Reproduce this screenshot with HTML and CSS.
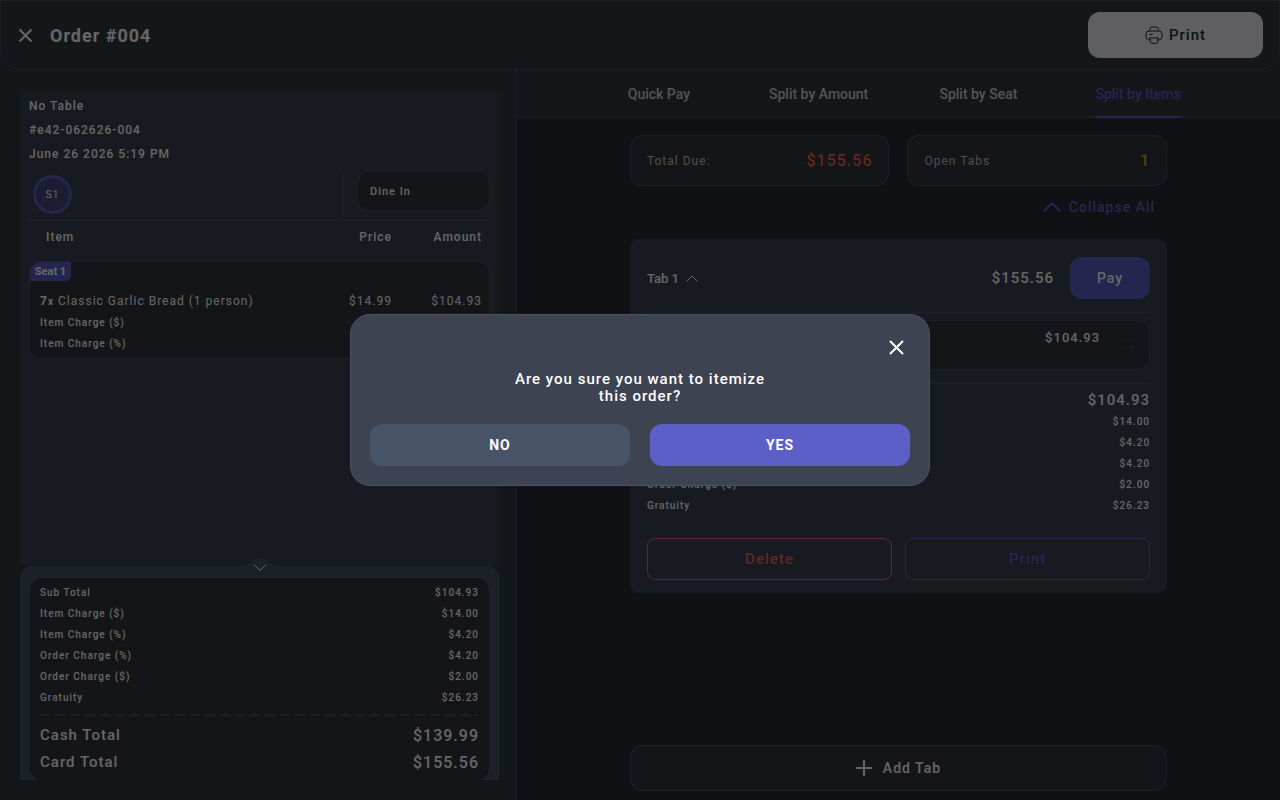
FILE: index.html
```html
<!DOCTYPE html>
<html lang="en">
<head>
	<meta charset="UTF-8">
	<meta name="viewport" content="width=device-width, initial-scale=1">
	<title>Order #004</title>
	<link rel="stylesheet" href="styles.css">
</head>
<body>
	<div class="page">
		<header class="header">
			<button class="icon-btn" type="button" aria-label="Close order">
				<svg width="15" height="15" viewBox="0 0 15 15"><path d="M1.5 1.5l12 12M13.5 1.5l-12 12"/></svg>
			</button>
			<h1>Order #004</h1>
			<button class="print-btn" type="button">
				<svg width="18" height="18" viewBox="0 0 18 18">
					<path d="M4.500 5V3.500Q4.500 1 7 1h4q2.500 0 2.500 2.500V5"/>
					<path d="M5 14H4q-3-.5-3-3V8q0-3 3-3h10q3 0 3 3v3q0 2.500-3 3h-1"/>
					<path d="M4 12h10M5 12v2.500Q5 17.500 8 17.500h2q3 0 3-3V12M4.500 8.500h3"/>
				</svg>
				Print
			</button>
		</header>

		<main class="main">
			<section class="left">
				<div class="order">
					<div class="info">
						<p>No Table</p>
						<p>#e42-062626-004</p>
						<p>June 26 2026 5:19 PM</p>
					</div>
					<div class="seats">
						<button class="seat" type="button">S1</button>
						<div class="order-type">
							<select aria-label="Order type">
								<option>Dine In</option>
							</select>
						</div>
					</div>
					<table class="items">
						<thead>
							<tr><th>Item</th><th>Price</th><th>Amount</th></tr>
						</thead>
						<tbody>
							<tr class="seat-row"><td><span class="badge">Seat 1</span></td></tr>
							<tr class="item-row"><td><b>7<small>x</small></b>Classic Garlic Bread (1 person)</td><td>$14.99</td><td>$104.93</td></tr>
							<tr class="charge"><td>Item Charge ($)</td><td></td><td>$14.00</td></tr>
							<tr class="charge"><td>Item Charge (%)</td><td></td><td>$4.20</td></tr>
						</tbody>
					</table>
				</div>
				<div class="totals">
					<button class="toggle" type="button" aria-label="Hide totals">
						<svg width="40" height="18" viewBox="0 0 40 18">
							<path class="bump" d="M0 9C9 9 10 1 20 1s11 8 20 8z"/>
							<path d="M14 7.500l6 6 6-6"/>
						</svg>
					</button>
					<div class="totals-box">
						<dl class="rows">
							<div><dt>Sub Total</dt><dd>$104.93</dd></div>
							<div><dt>Item Charge ($)</dt><dd>$14.00</dd></div>
							<div><dt>Item Charge (%)</dt><dd>$4.20</dd></div>
							<div><dt>Order Charge (%)</dt><dd>$4.20</dd></div>
							<div><dt>Order Charge ($)</dt><dd>$2.00</dd></div>
							<div><dt>Gratuity</dt><dd>$26.23</dd></div>
						</dl>
						<div class="dashes"></div>
						<dl class="rows big">
							<div><dt>Cash Total</dt><dd>$139.99</dd></div>
							<div><dt>Card Total</dt><dd>$155.56</dd></div>
						</dl>
					</div>
				</div>
			</section>

			<section class="right">
				<nav class="tabs">
					<a href="#quick">Quick Pay</a>
					<a href="#amount">Split by Amount</a>
					<a href="#seat">Split by Seat</a>
					<a class="active" href="#items">Split by Items</a>
				</nav>
				<div class="split">
					<div class="summary">
						<div class="box"><span>Total Due:</span><strong class="red">$155.56</strong></div>
						<div class="box"><span>Open Tabs</span><strong class="amber">1</strong></div>
					</div>
					<button class="collapse" type="button">
						<svg width="18" height="10" viewBox="0 0 18 10"><path d="M1 9l7-7q1-1 2 0l7 7"/></svg>
						Collapse All
					</button>
					<article class="tab-card">
						<div class="tab-head">
							<button class="tab-name" type="button">
								Tab 1
								<svg width="12" height="7" viewBox="0 0 12 7"><path d="M.5 6.500L6 1l5.500 5.500"/></svg>
							</button>
							<strong>$155.56</strong>
							<button class="pay" type="button">Pay</button>
						</div>
						<div class="tab-item">
							<div class="item-box">
								<strong>$104.93</strong>
								<svg width="20" height="18" viewBox="0 0 20 18"><path d="M5 1L0 6h20M0 12h20l-5 5"/></svg>
							</div>
						</div>
						<p class="sub">$104.93</p>
						<dl class="rows">
							<div><dt>Item Charge ($)</dt><dd>$14.00</dd></div>
							<div><dt>Item Charge (%)</dt><dd>$4.20</dd></div>
							<div><dt>Order Charge (%)</dt><dd>$4.20</dd></div>
							<div><dt>Order Charge ($)</dt><dd>$2.00</dd></div>
							<div><dt>Gratuity</dt><dd>$26.23</dd></div>
						</dl>
						<div class="tab-actions">
							<button class="delete" type="button">Delete</button>
							<button class="print" type="button">Print</button>
						</div>
					</article>
					<button class="add-tab" type="button">
						<svg width="16" height="16" viewBox="0 0 16 16"><path d="M8 0v16M0 8h16"/></svg>
						Add Tab
					</button>
				</div>
			</section>
		</main>
	</div>

	<div class="overlay">
		<div class="modal" role="dialog" aria-modal="true" aria-labelledby="question">
			<button class="icon-btn" type="button" aria-label="Close">
				<svg width="15" height="15" viewBox="0 0 15 15"><path d="M1 1l13 13M14 1L1 14"/></svg>
			</button>
			<p id="question">Are you sure you want to itemize this order?</p>
			<div class="modal-actions">
				<button class="no" type="button">NO</button>
				<button class="yes" type="button">YES</button>
			</div>
		</div>
	</div>
</body>
</html>
```

FILE: styles.css
```css
*{
	box-sizing: border-box;
}
:root{
	--side: #323a43;
	--dark: #282b32;
	--card: #32353d;
	--panel: #3b4252;
	--line: #475467;
	--purple: #5d5fc9;
}
body{
	margin: 0;
	background: var(--dark);
	color: #fff;
	font-family: Roboto, "Liberation Sans", sans-serif;
	font-size: 12px;
	letter-spacing: 1px;
}
h1, p, dl, dd{
	margin: 0;
}
button, select{
	font: inherit;
	color: inherit;
	letter-spacing: inherit;
	cursor: pointer;
}
button{
	padding: 0;
	border: 0;
	background: none;
}
svg{
	display: block;
	fill: none;
	stroke: currentColor;
}
.page{
	display: flex;
	flex-direction: column;
	height: 100vh;
	background: var(--side);
}

/* header */
.header{
	display: flex;
	align-items: center;
	height: 70px;
	padding: 0 16px;
	border: 1px solid var(--line);
	border-radius: 0 0 20px 20px;
}
.header h1{
	flex: 1;
	margin-left: 16px;
	font-size: 18px;
	font-weight: 700;
}
.icon-btn svg{
	stroke-width: 2;
}
.header .icon-btn{
	padding: 1px;
}
.print-btn{
	display: flex;
	align-items: center;
	justify-content: center;
	gap: 6px;
	width: 175px;
	height: 46px;
	border-radius: 12px;
	background: #eeecf5;
	color: #282b32;
	font-size: 15px;
	font-weight: 500;
}

.main{
	flex: 1;
	display: grid;
	grid-template-columns: minmax(0, 517fr) minmax(0, 763fr);
	min-height: 0;
}

/* order */
.left{
	display: flex;
	flex-direction: column;
	padding: 20px 17px 20px 20px;
	border-right: 1px solid var(--line);
}
.order{
	flex: 1;
	padding: 4px 9px;
	border-radius: 8px 8px 0 0;
	background: var(--panel);
}
.info p{
	font-size: 12px;
	font-weight: 500;
	line-height: 24px;
}
.seats{
	display: flex;
	justify-content: space-between;
	align-items: flex-end;
	height: 55px;
	padding: 0 0 2px 4px;
	border-bottom: 1px solid var(--line);
}
.seat{
	width: 39px;
	height: 39px;
	margin-bottom: 4px;
	border: 3px solid var(--purple);
	border-radius: 50%;
	background: #474a7d;
	font-size: 10px;
}
.order-type{
	height: 47px;
	padding-left: 13px;
	border-left: 1px solid var(--line);
}
.order-type select{
	appearance: none;
	width: 133px;
	height: 40px;
	padding: 0 12px;
	border: 1px solid var(--line);
	border-radius: 12px;
	background: var(--card);
	font-size: 11px;
	font-weight: 500;
}
.items, .items thead, .items tbody{
	display: block;
}
.items tr{
	display: grid;
	grid-template-columns: minmax(0, 1fr) 90px 90px;
	padding: 0 7px 0 10px;
	line-height: 21px;
}
.items th, .items td{
	padding: 0;
	text-align: right;
}
.items th:first-child, .items td:first-child{
	text-align: left;
}
.items thead tr{
	padding: 6px 8px 13px 17px;
}
.items th{
	font-size: 12px;
	font-weight: 500;
}
.items tbody{
	overflow: hidden;
	border: 1px solid var(--line);
	border-radius: 12px;
	background: var(--card);
}
.items .seat-row{
	height: 29px;
	padding: 0;
}
.badge{
	display: block;
	width: 41px;
	height: 19px;
	border-radius: 0 0 6px 0;
	background: var(--purple);
	font-size: 11px;
	font-weight: 700;
	letter-spacing: 0;
	line-height: 19px;
	text-align: center;
}
.items b{
	margin-right: 4px;
}
.items small{
	font-size: 10px;
}
.items .item-row{
	font-size: 12px;
}
.items .charge{
	font-size: 10px;
	font-weight: 500;
}
.items .charge:last-child{
	margin-bottom: 4px;
}

/* totals */
.totals{
	position: relative;
	padding: 12px 10px 0;
	border-radius: 12px 12px 0 0;
	background: var(--line);
}
.toggle{
	position: absolute;
	top: -9px;
	left: 50%;
	transform: translateX(-50%);
}
.bump{
	fill: var(--line);
	stroke: none;
}
.totals-box{
	padding: 4px 10px;
	border-radius: 12px;
	background: var(--card);
}
.rows > div{
	display: flex;
	justify-content: space-between;
	font-size: 10px;
	font-weight: 500;
	line-height: 21px;
}
.rows.big > div{
	font-size: 15px;
	line-height: 27px;
}
.rows.big dd{
	font-size: 16px;
}
.dashes{
	height: 2px;
	margin: 6px 0;
	background: repeating-linear-gradient(90deg, var(--line) 0 10px, transparent 10px 15px);
}

/* split payments */
.right{
	display: flex;
	flex-direction: column;
	background: var(--dark);
}
.tabs{
	display: grid;
	grid-template-columns: repeat(4, 1fr);
	justify-items: center;
	height: 48px;
	padding: 0 62px;
	border-bottom: 1px solid var(--line);
	background: var(--side);
}
.tabs a{
	height: 48px;
	color: #d4d0d6;
	font-size: 14px;
	font-weight: 500;
	letter-spacing: 0;
	line-height: 48px;
	text-decoration: none;
}
.tabs .active{
	border-bottom: 2px solid var(--purple);
	color: var(--purple);
}
.split{
	flex: 1;
	display: flex;
	flex-direction: column;
	align-self: center;
	width: 70.4%;
	padding: 17px 0 9px;
}
.summary{
	display: grid;
	grid-template-columns: 1fr 1fr;
	gap: 18px;
}
.box{
	display: flex;
	align-items: center;
	justify-content: space-between;
	height: 51px;
	padding: 0 16px;
	border: 1px solid var(--line);
	border-radius: 12px;
	background: var(--card);
}
.box span{
	color: #c4c4c8;
}
.box strong{
	font-size: 16px;
	font-weight: 500;
}
.box .red{
	color: #f2605a;
}
.box .amber{
	color: #e89c1c;
}
.collapse{
	display: flex;
	align-items: center;
	align-self: flex-end;
	gap: 8px;
	height: 42px;
	margin-bottom: 11px;
	padding-right: 12px;
	color: var(--purple);
	font-size: 14px;
	font-weight: 500;
}
.collapse svg{
	stroke-width: 2;
}
.tab-card{
	padding: 18px 17px 13px;
	border-radius: 8px;
	background: var(--panel);
}
.tab-head{
	display: flex;
	align-items: center;
	padding-bottom: 13px;
	border-bottom: 1px solid var(--line);
}
.tab-name{
	display: flex;
	align-items: center;
	gap: 7px;
	margin-right: auto;
	font-size: 13px;
	font-weight: 500;
	letter-spacing: 0;
}
.tab-head strong{
	margin-right: 16px;
	font-size: 15px;
	font-weight: 500;
}
.pay{
	width: 80px;
	height: 42px;
	border-radius: 12px;
	background: var(--purple);
	font-size: 14px;
	font-weight: 500;
}
.tab-item{
	padding: 7px 0 13px;
	border-bottom: 1px solid var(--line);
}
.item-box{
	display: flex;
	justify-content: flex-end;
	gap: 15px;
	height: 50px;
	padding: 9px 14px;
	border: 1px solid var(--line);
	border-radius: 12px;
	background: var(--card);
}
.item-box strong{
	font-size: 13px;
	font-weight: 500;
}
.item-box svg{
	margin-top: 5px;
	color: #3b4049;
}
.sub{
	padding-top: 6px;
	font-size: 15px;
	font-weight: 500;
	line-height: 21px;
	text-align: right;
}
.tab-actions{
	display: grid;
	grid-template-columns: 1fr 1fr;
	gap: 13px;
	margin-top: 22px;
}
.tab-actions button{
	height: 42px;
	border: 1px solid;
	border-radius: 8px;
	font-size: 15px;
	font-weight: 500;
}
.tab-actions .delete{
	color: #f2605a;
}
.tab-actions .print{
	color: var(--purple);
}
.add-tab{
	display: flex;
	align-items: center;
	justify-content: center;
	gap: 11px;
	height: 46px;
	margin-top: auto;
	border: 1px solid var(--line);
	border-radius: 12px;
	background: var(--card);
	font-size: 14px;
	font-weight: 500;
}
.add-tab svg{
	stroke-width: 2;
}

/* confirm dialog */
.overlay{
	position: fixed;
	inset: 0;
	display: flex;
	align-items: center;
	justify-content: center;
	background: rgba(0,0,0,0.6);
}
.modal{
	display: flex;
	flex-direction: column;
	align-items: center;
	width: 580px;
	padding: 25px 19px 19px;
	border: 1px solid var(--line);
	border-radius: 20px;
	background: #3d4351;
}
.modal .icon-btn{
	align-self: flex-end;
	margin-right: 6px;
}
.modal p{
	width: 280px;
	margin: 16px 0 19px;
	font-size: 15px;
	font-weight: 500;
	line-height: 17px;
	text-align: center;
}
.modal-actions{
	display: grid;
	grid-template-columns: 1fr 1fr;
	gap: 20px;
	width: 100%;
}
.modal-actions button{
	height: 42px;
	border-radius: 12px;
	font-size: 14px;
	font-weight: 700;
}
.no{
	background: #475467;
}
.yes{
	background: var(--purple);
}
```
